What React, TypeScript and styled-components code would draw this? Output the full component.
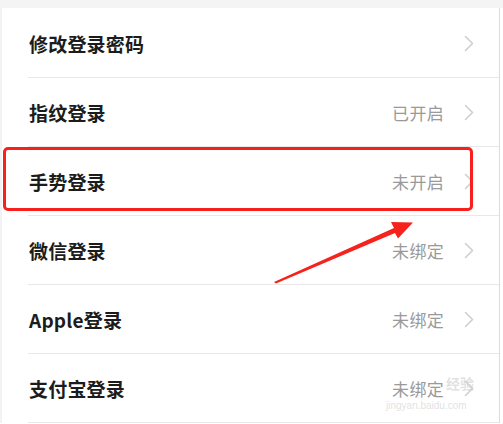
import styled, { createGlobalStyle } from "styled-components";

const GlobalStyle = createGlobalStyle`
    body {
        margin: 0;
        background: #fff;
        font-family: "Noto Sans CJK SC", "Noto Sans", sans-serif;
    }
`;

type Item = { id: number; label: string; value?: string };

const items: Item[] = [
    { id: 1, label: "修改登录密码" },
    { id: 2, label: "指纹登录", value: "已开启" },
    { id: 3, label: "手势登录", value: "未开启" },
    { id: 4, label: "微信登录", value: "未绑定" },
    { id: 5, label: "Apple登录", value: "未绑定" },
    { id: 6, label: "支付宝登录", value: "未绑定" },
];

const Chevron = () => (
    <svg width="10" height="17" viewBox="0 0 10 17" fill="none">
        <path d="M1.5 1.5 L8.5 8.5 L1.5 15.5" stroke="#cfcfcf" strokeWidth="1.6" strokeLinecap="round" strokeLinejoin="round" />
    </svg>
);

const Arrow = () => (
    <StyledArrow width="503" height="424" viewBox="0 0 503 424">
        <polygon
            points="274,282 276,283.5 395,233 398,238.5 413,222.5 391,222 394,228"
            fill="#f5231c"
        />
    </StyledArrow>
);

const App = () => {
    return (
        <StyledPage>
            <GlobalStyle />
            <StyledTopBand />
            <StyledList>
                {items.map(({ id, label, value }) => (
                    <StyledItem key={id}>
                        <StyledRow>
                            <StyledLabel>{label}</StyledLabel>
                            <StyledRight>
                                {value && <StyledValue>{value}</StyledValue>}
                                <Chevron />
                            </StyledRight>
                        </StyledRow>
                        {id === 3 && <StyledHighlight />}
                    </StyledItem>
                ))}
            </StyledList>
            <Arrow />
            <StyledMarkTitle>经验</StyledMarkTitle>
            <StyledMarkUrl>jingyan.baidu.com</StyledMarkUrl>
        </StyledPage>
    );
};

const StyledPage = styled.div`
    position: relative;
    width: 503px;
    height: 424px;
    overflow: hidden;
    background: #fff;
`;

const StyledTopBand = styled.div`
    height: 8px;
    background: #f4f4f4;
`;

const StyledList = styled.div`
    width: 497px;
    padding-top: 1px;
    border-left: 2px solid #f2f2f2;
    border-right: 1px solid #dcdcdc;
    display: flex;
    flex-direction: column;
`;

const StyledItem = styled.div`
    position: relative;
`;

const StyledRow = styled.div`
    display: flex;
    align-items: center;
    justify-content: space-between;
    height: 68px;
    margin-left: 26px;
    padding: 0 25px 0 1px;
    border-bottom: 1px solid #e8e8e8;
`;

const StyledLabel = styled.span`
    color: #1c1c1c;
    font-size: 19px;
    font-weight: 700;
    letter-spacing: 0.2px;
`;

const StyledRight = styled.div`
    display: flex;
    align-items: center;
    gap: 20px;
`;

const StyledValue = styled.span`
    color: #9a9a9a;
    font-size: 17px;
    letter-spacing: 0.3px;
`;

const StyledHighlight = styled.div`
    position: absolute;
    top: 0;
    left: 1px;
    width: 464px;
    height: 58px;
    border: 3px solid #f7201c;
    border-radius: 5px;
`;

const StyledArrow = styled.svg`
    position: absolute;
    left: 0;
    top: 0;
    pointer-events: none;
`;

const StyledMarkTitle = styled.span`
    position: absolute;
    left: 446px;
    top: 374px;
    color: rgba(205, 205, 205, 0.6);
    font-size: 14px;
    font-weight: 700;
    line-height: 18px;
`;

const StyledMarkUrl = styled.span`
    position: absolute;
    left: 386px;
    top: 400px;
    color: rgba(205, 205, 205, 0.6);
    font-family: "Liberation Sans", sans-serif;
    font-size: 10px;
    line-height: 12px;
`;

export default App;
